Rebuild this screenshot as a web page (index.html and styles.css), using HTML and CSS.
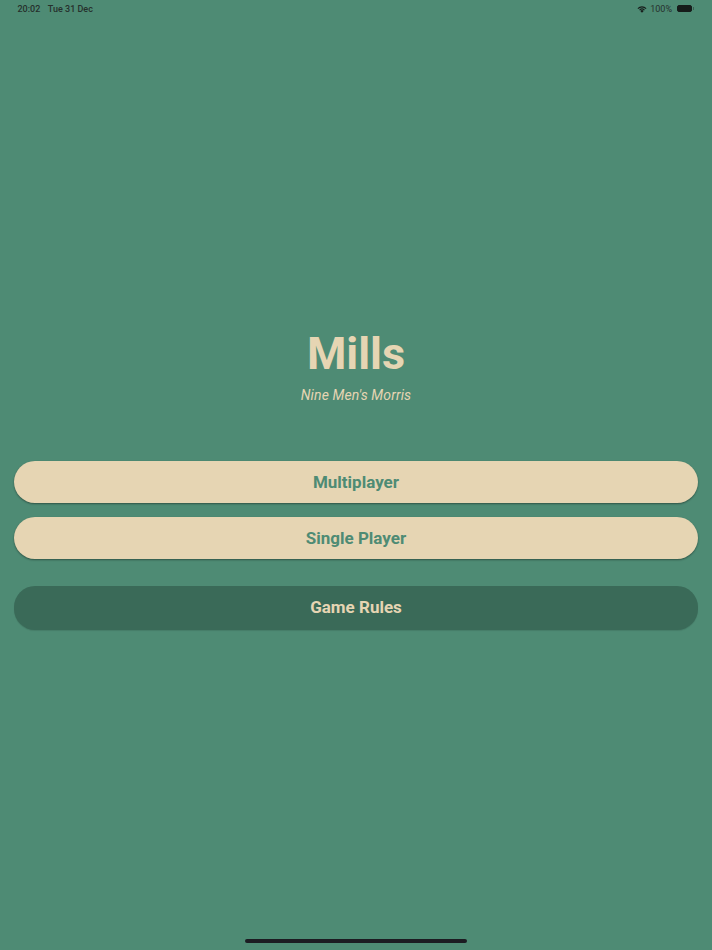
FILE: index.html
```html
<!DOCTYPE html>
<html lang="en">
<head>
<meta charset="UTF-8" />
<meta name="viewport" content="width=device-width, initial-scale=1" />
<title>Mills</title>
<link rel="stylesheet" href="styles.css">
</head>
<body>

<div class="statusBar">
  <div class="statusTime">
    <span>20:02</span>
    <span>Tue 31 Dec</span>
  </div>
  <div class="statusRight">
    <svg class="wifiIcon" viewBox="0 0 12 9" width="10" height="8">
      <path d="M6 9 L4 6.8 A2.8 2.8 0 0 1 8 6.8 Z" fill="#161c1a" />
      <path d="M2.6 5.4 A4.8 4.8 0 0 1 9.4 5.4 L8.5 6.3 A3.5 3.5 0 0 0 3.5 6.3 Z" fill="#161c1a" />
      <path d="M0.6 3.5 A7.6 7.6 0 0 1 11.4 3.5 L10.4 4.6 A6.1 6.1 0 0 0 1.6 4.6 Z" fill="#161c1a" />
    </svg>
    <span>100%</span>
    <div class="battery">
      <div class="batteryBody"></div>
      <div class="batteryTip"></div>
    </div>
  </div>
</div>

<main class="mainMenu">
  <h1 class="gameTitle">Mills</h1>
  <p class="gameSubtitle">Nine Men's Morris</p>
  <div class="menuButtons">
    <button class="menuButton primary">Multiplayer</button>
    <button class="menuButton primary">Single Player</button>
    <button class="menuButton secondary">Game Rules</button>
  </div>
</main>

<div class="homeIndicator"></div>

</body>
</html>
```

FILE: styles.css
```css
html, body {
  margin: 0;
  height: 950px;
  overflow: hidden;
}

body {
  background-color: #4e8b74;
  font-family: Roboto, sans-serif;
  position: relative;
}

.statusBar {
  height: 17px;
  padding: 0 18px 0 17.5px;
  display: flex;
  justify-content: space-between;
  align-items: center;
  font-family: Roboto, "Liberation Sans", sans-serif;
  font-size: 9px;
  color: #26302c;
}

.statusTime {
  display: flex;
  gap: 7.5px;
  font-weight: 500;
}

.statusRight {
  display: flex;
  align-items: center;
  gap: 3px;
  color: #26302c;
}

.battery {
  display: flex;
  align-items: center;
  margin-left: 2px;
}

.batteryBody {
  width: 13px;
  height: 5px;
  background-color: #161c1a;
  border: 1px solid #161c1a;
  border-radius: 2px;
}

.batteryTip {
  width: 1px;
  height: 3px;
  margin-left: 1px;
  background-color: #3b5f52;
}

.mainMenu {
  display: flex;
  flex-direction: column;
  align-items: center;
  padding: 0 14px;
  margin-top: 309px;
}

.gameTitle {
  margin: 0;
  font-size: 45px;
  line-height: 56px;
  font-weight: 700;
  color: #e6d5b3;
}

.gameSubtitle {
  margin: 3px 0 0;
  font-size: 14px;
  line-height: 20px;
  letter-spacing: 0.12px;
  font-style: italic;
  color: #e6d5b3;
}

.menuButtons {
  width: 100%;
  margin-top: 56px;
  display: flex;
  flex-direction: column;
  gap: 14px;
}

.menuButton {
  height: 42px;
  padding: 0 0 1px;
  border: none;
  border-radius: 21px;
  font-family: Roboto, sans-serif;
  font-size: 17px;
  font-weight: 700;
}

.primary {
  background-color: #e6d5b3;
  color: #4e8b74;
  box-shadow: 0 1px 2px rgba(0, 0, 0, 0.4);
}

.secondary {
  height: 44px;
  margin-top: 13px;
  padding-bottom: 2px;
  background-color: #3a6a58;
  color: #e6d5b3;
  box-shadow: 0 1px 1px rgba(0, 0, 0, 0.1);
}

.homeIndicator {
  position: absolute;
  left: 245px;
  bottom: 7px;
  width: 222px;
  height: 4px;
  border-radius: 2px;
  background-color: #1c1c22;
}
```
